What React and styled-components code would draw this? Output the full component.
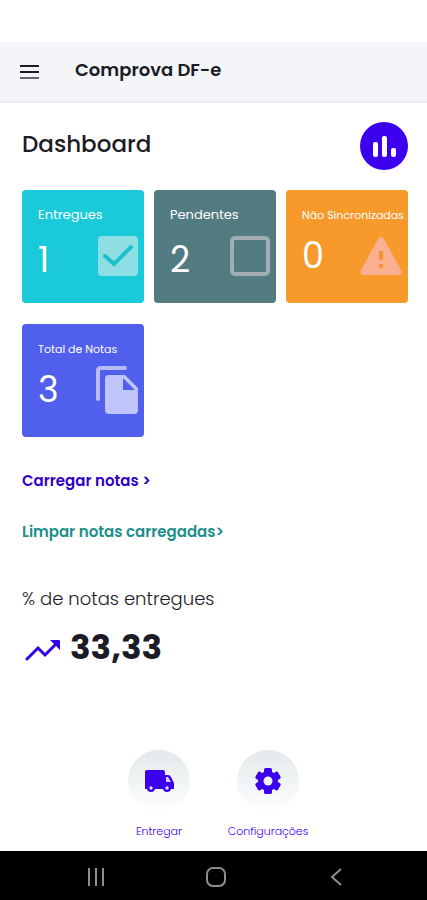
import React from "react";
import styled, { createGlobalStyle } from "styled-components";

const GlobalStyle = createGlobalStyle`
  * {
    box-sizing: border-box;
  }

  body {
    margin: 0;
    background: #ffffff;
    color: #1c1c26;
    font-family: Poppins, Inter, sans-serif;
  }

  button {
    padding: 0;
    border: none;
    background: none;
    font-family: inherit;
    cursor: pointer;
  }

  svg {
    display: block;
  }
`;

const Screen = styled.div`
  display: flex;
  flex-direction: column;
  min-height: 100vh;
  padding-top: 42px;
`;

const Header = styled.header`
  display: flex;
  align-items: center;
  gap: 34px;
  height: 61px;
  padding: 0 18px;
  background: #f4f5f8;
  border-bottom: 2px solid #e9ebed;
`;

const AppName = styled.span`
  font-size: 18px;
  line-height: 28px;
  font-weight: 600;
  padding-bottom: 4px;
`;

const Content = styled.main`
  display: flex;
  flex-direction: column;
  padding: 19px 19px 0 22px;
`;

const TitleRow = styled.div`
  display: flex;
  align-items: center;
  justify-content: space-between;
  margin-bottom: 20px;
`;

const Title = styled.h1`
  margin: 0;
  padding-bottom: 5px;
  font-size: 23px;
  line-height: 32px;
  font-weight: 500;
`;

const ChartButton = styled.button`
  display: flex;
  align-items: center;
  justify-content: center;
  width: 48px;
  height: 48px;
  border-radius: 50%;
  background: #3d00ef;
`;

const Cards = styled.div`
  display: grid;
  grid-template-columns: repeat(3, minmax(0, 1fr));
  gap: 21px 10px;
  margin-bottom: 30px;
`;

const Card = styled.section`
  height: 113px;
  padding: 14px 6px 0 16px;
  border-radius: 4px;
  background: ${(props) => props.$color};
  color: #ffffff;
`;

const CardLabel = styled.h2`
  margin: 0 0 3px;
  font-size: ${(props) => (props.$small ? "11px" : "13px")};
  line-height: 22px;
  font-weight: 400;
  white-space: nowrap;
`;

const CardBody = styled.div`
  display: flex;
  align-items: center;
  justify-content: space-between;
  height: 54px;
`;

const CardValue = styled.span`
  padding-top: ${(props) => (props.$small ? "0" : "8px")};
  font-size: 35px;
  line-height: 54px;
`;

const ActionLink = styled.a`
  align-self: flex-start;
  margin-bottom: 23px;
  color: ${(props) => props.$color};
  font-size: 15px;
  line-height: 28px;
  font-weight: 600;
  text-decoration: none;
`;

const RateLabel = styled.h2`
  margin: 16px 0 14px;
  font-size: 18px;
  line-height: 28px;
  font-weight: 300;
`;

const Rate = styled.div`
  display: flex;
  align-items: center;
  gap: 8px;
`;

const RateValue = styled.strong`
  font-size: 34px;
  line-height: 40px;
  font-weight: 700;
`;

const BottomMenu = styled.nav`
  display: flex;
  justify-content: center;
  gap: 27px;
  margin-top: auto;
  padding-bottom: 10px;
`;

const MenuButton = styled.button`
  display: flex;
  flex-direction: column;
  align-items: center;
  gap: 9px;
  min-width: 82px;
  color: #3d00ef;
  font-size: 11px;
  line-height: 20px;
  font-weight: 300;
`;

const MenuCircle = styled.span`
  display: flex;
  align-items: center;
  justify-content: center;
  width: 62px;
  height: 62px;
  border-radius: 50%;
  background: linear-gradient(#e2e9ea, #ffffff);
`;

const SystemBar = styled.footer`
  display: grid;
  grid-template-columns: repeat(3, 120px);
  justify-content: center;
  justify-items: center;
  align-items: center;
  height: 49px;
  padding: 3px 0 0 4px;
  background: #000000;
`;

const MenuIcon = () => (
  <svg width="23" height="16" viewBox="0 0 23 16" fill="none" strokeWidth="2">
    <path d="M2 2h19M2 8h19" stroke="#1c1c26" />
    <path d="M2 14h19" stroke="#65656c" />
  </svg>
);

const ChartIcon = () => (
  <svg width="24" height="24" viewBox="0 0 24 24" fill="#ffffff">
    <rect x="1" y="8" width="5" height="15" rx="2" />
    <rect x="10" y="2" width="5" height="21" rx="2" />
    <rect x="19" y="14" width="5" height="9" rx="2" />
  </svg>
);

const CheckedIcon = () => (
  <svg width="40" height="40" viewBox="0 0 40 40">
    <rect width="40" height="40" rx="4" fill="#8edfe4" />
    <path
      d="M7 20l9 8 17-17"
      fill="none"
      stroke="#1ec0cb"
      strokeWidth="4"
      strokeLinecap="round"
    />
  </svg>
);

const UncheckedIcon = () => (
  <svg width="40" height="40" viewBox="0 0 40 40" fill="none">
    <rect x="2" y="2" width="36" height="36" rx="3" stroke="#a3acb3" strokeWidth="4" />
  </svg>
);

const WarningIcon = () => (
  <svg width="42" height="38" viewBox="0 0 42 38">
    <path
      d="M18 2q3-4 6 0l17 31q2 5-3 5H4q-5 0-3-5z"
      fill="#faaf90"
    />
    <path d="M21 14v9M21 27v4" stroke="#f29430" strokeWidth="4" />
  </svg>
);

const FilesIcon = () => (
  <svg width="42" height="48" viewBox="0 0 42 48">
    <path
      d="M2 33V5q0-3 3-3h24"
      fill="none"
      stroke="#b7bcf8"
      strokeWidth="4"
      strokeLinecap="round"
    />
    <path
      d="M13 9h16l13 13v22q0 4-4 4H13q-4 0-4-4V13q0-4 4-4zM27 12v12h12z"
      fill="#bfc5fa"
      fillRule="evenodd"
    />
  </svg>
);

const TrendIcon = () => (
  <svg width="40" height="28" viewBox="0 0 40 28">
    <path
      d="M5 26l11-11 7 7L35 10"
      fill="none"
      stroke="#3200e4"
      strokeWidth="3"
      strokeLinecap="round"
    />
    <path d="M28 7h9q1 0 1 1v9z" fill="#3200e4" />
  </svg>
);

const TruckIcon = () => (
  <svg width="30" height="24" viewBox="0 0 30 24">
    <path
      d="M3 1h16q2 0 2 2v3h3q2 0 3 2l2 4q1 1 1 3v5H1V3q0-2 2-2z"
      fill="#3d00ef"
    />
    <path d="M22 8h2l3 5h-5z" fill="#d6ccf8" />
    <circle cx="7" cy="19" r="4" fill="#3d00ef" />
    <circle cx="23" cy="19" r="4" fill="#3d00ef" />
    <circle cx="7" cy="19" r="1.7" fill="#e5e0fa" />
    <circle cx="23" cy="19" r="1.7" fill="#e5e0fa" />
  </svg>
);

const GearIcon = () => (
  <svg width="28" height="28" viewBox="0 0 28 28">
    <g fill="#3d00ef">
      <circle cx="14" cy="14" r="10" />
      <rect x="10" y="1" width="8" height="26" rx="1.5" />
      <rect x="10" y="1" width="8" height="26" rx="1.5" transform="rotate(60 14 14)" />
      <rect x="10" y="1" width="8" height="26" rx="1.5" transform="rotate(120 14 14)" />
    </g>
    <circle cx="14" cy="14" r="4.5" fill="#f0f3f6" />
  </svg>
);

const RecentIcon = () => (
  <svg width="18" height="18" viewBox="0 0 18 18" stroke="#8d8d8d" strokeWidth="2">
    <path d="M2 0v18M9 0v18M16 0v18" />
  </svg>
);

const HomeIcon = () => (
  <svg width="20" height="20" viewBox="0 0 20 20" fill="none">
    <rect x="1" y="1" width="18" height="18" rx="6" stroke="#8d8d8d" strokeWidth="2" />
  </svg>
);

const BackIcon = () => (
  <svg width="12" height="18" viewBox="0 0 12 18" fill="none">
    <path d="M11 1L2 9l9 8" stroke="#8d8d8d" strokeWidth="2" />
  </svg>
);

const cards = [
  { label: "Entregues", value: 1, color: "#1acadb", icon: <CheckedIcon /> },
  { label: "Pendentes", value: 2, color: "#537b82", icon: <UncheckedIcon /> },
  {
    label: "Não Sincronizadas",
    value: 0,
    color: "#f8992c",
    icon: <WarningIcon />,
    small: true,
  },
  {
    label: "Total de Notas",
    value: 3,
    color: "#5060ed",
    icon: <FilesIcon />,
    small: true,
  },
];

export default function App() {
  return (
    <>
      <GlobalStyle />
      <Screen>
        <Header>
          <button type="button" aria-label="Menu">
            <MenuIcon />
          </button>
          <AppName>Comprova DF-e</AppName>
        </Header>

        <Content>
          <TitleRow>
            <Title>Dashboard</Title>
            <ChartButton type="button" aria-label="Gráficos">
              <ChartIcon />
            </ChartButton>
          </TitleRow>

          <Cards>
            {cards.map((card) => (
              <Card key={card.label} $color={card.color}>
                <CardLabel $small={card.small}>{card.label}</CardLabel>
                <CardBody>
                  <CardValue $small={card.small}>{card.value}</CardValue>
                  {card.icon}
                </CardBody>
              </Card>
            ))}
          </Cards>

          <ActionLink href="#carregar" $color="#3200c8">
            Carregar notas &gt;
          </ActionLink>
          <ActionLink href="#limpar" $color="#218f8b">
            Limpar notas carregadas&gt;
          </ActionLink>

          <RateLabel>% de notas entregues</RateLabel>
          <Rate>
            <TrendIcon />
            <RateValue>33,33</RateValue>
          </Rate>
        </Content>

        <BottomMenu>
          <MenuButton type="button">
            <MenuCircle>
              <TruckIcon />
            </MenuCircle>
            Entregar
          </MenuButton>
          <MenuButton type="button">
            <MenuCircle>
              <GearIcon />
            </MenuCircle>
            Configurações
          </MenuButton>
        </BottomMenu>

        <SystemBar>
          <button type="button" aria-label="Recentes">
            <RecentIcon />
          </button>
          <button type="button" aria-label="Início">
            <HomeIcon />
          </button>
          <button type="button" aria-label="Voltar">
            <BackIcon />
          </button>
        </SystemBar>
      </Screen>
    </>
  );
}
